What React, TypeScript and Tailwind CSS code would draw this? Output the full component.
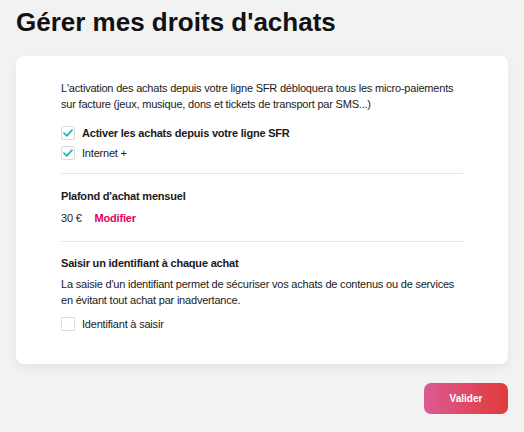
import React from "react";

function Check({ checked }: { checked: boolean }) {
  return (
    <span className="flex h-[14px] w-[14px] shrink-0 items-center justify-center rounded-[2px] border border-[#dcdcdc] bg-white">
      {checked && (
        <svg width="10" height="8" viewBox="0 0 10 8" fill="none">
          <path d="M1 4.2 L3.8 6.8 L9 1.2" stroke="#2fb3b3" strokeWidth="1.8" strokeLinecap="round" strokeLinejoin="round" />
        </svg>
      )}
    </span>
  );
}

export default function App() {
  return (
    <div className="min-h-[432px] w-[524px] bg-[#f2f2f2] px-4 pt-[6px] text-[#1a1a1a] font-['Liberation_Sans',Arial,sans-serif]">
      <h1 className="text-[26px] font-bold leading-[32px] text-[#111]">Gérer mes droits d'achats</h1>
      <div className="mt-[18px] rounded-[8px] bg-white px-[45px] pt-[24px] pb-[33px] text-[11px] tracking-[-0.2px] shadow-[0_4px_10px_rgba(0,0,0,0.06)]">
        <p className="leading-[16px]">
          L'activation des achats depuis votre ligne SFR débloquera tous les micro-paiements sur facture (jeux, musique, dons et tickets de transport par SMS...)
        </p>
        <div className="mt-[14px] flex flex-col gap-[6px]">
          <label className="flex items-center gap-[7px] font-bold leading-[14px]">
            <Check checked />
            Activer les achats depuis votre ligne SFR
          </label>
          <label className="flex items-center gap-[7px] leading-[14px]">
            <Check checked />
            Internet +
          </label>
        </div>
        <div className="mt-[13px] h-px bg-[#e6e6e6]" />
        <div className="pt-[14px] font-bold leading-[16px]">Plafond d'achat mensuel</div>
        <div className="mt-[6px] flex items-center gap-[13px] leading-[16px]">
          <span>30 €</span>
          <span className="font-bold text-[#e6005c]">Modifier</span>
        </div>
        <div className="mt-[15px] h-px bg-[#e6e6e6]" />
        <div className="pt-[13px] font-bold leading-[16px]">Saisir un identifiant à chaque achat</div>
        <p className="mt-[5px] leading-[16px]">
          La saisie d'un identifiant permet de sécuriser vos achats de contenus ou de services en évitant tout achat par inadvertance.
        </p>
        <label className="mt-[9px] flex items-center gap-[7px] leading-[14px]">
          <Check checked={false} />
          Identifiant à saisir
        </label>
      </div>
      <div className="mt-[19px] flex justify-end">
        <button className="h-[31px] w-[84px] rounded-[7px] bg-[linear-gradient(90deg,#dc5a92,#e03a3a)] text-[10px] font-bold text-white">
          Valider
        </button>
      </div>
    </div>
  );
}
